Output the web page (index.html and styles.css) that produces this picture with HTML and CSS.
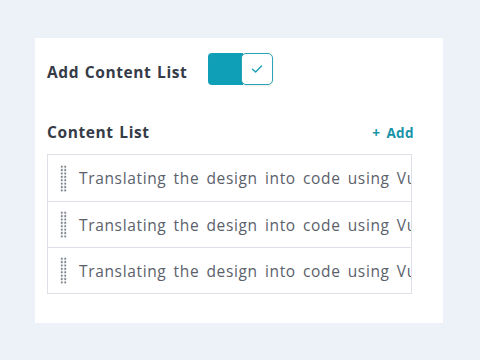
FILE: index.html
```html
<!DOCTYPE html>
<html lang="en">
<head>
    <meta charset="UTF-8">
    <meta name="viewport" content="width=device-width, initial-scale=1.0">
    <title>Content List</title>
    <link rel="stylesheet" href="styles.css">
</head>
<body>
    <div class="panel">
        <div class="setting">
            <span class="setting-label">Add Content List</span>
            <button class="toggle on" aria-label="Add Content List">
                <span class="toggle-fill"></span>
                <span class="toggle-knob">
                    <svg width="12" height="10" viewBox="0 0 12 10"><path d="M1.5 5.2 4.6 8 10.5 2" fill="none" stroke="#1a9fb4" stroke-width="1.4" stroke-linecap="round" stroke-linejoin="round"/></svg>
                </span>
            </button>
        </div>

        <div class="list-head">
            <span class="list-title">Content List</span>
            <a class="add-link" href="#">+ Add</a>
        </div>

        <ul class="content-list">
            <li class="item"><span class="handle"></span><span class="item-text">Translating the design into code using Vue.js</span></li>
            <li class="item"><span class="handle"></span><span class="item-text">Translating the design into code using Vue.js</span></li>
            <li class="item"><span class="handle"></span><span class="item-text">Translating the design into code using Vue.js</span></li>
        </ul>
    </div>
</body>
</html>
```

FILE: styles.css
```css
* {
    margin: 0;
    padding: 0;
    box-sizing: border-box;
}

body {
    font-family: "Open Sans", "Noto Sans", sans-serif;
    background: #edf1f8;
    padding: 38px 37px 0 35px;
}

.panel {
    background: #fff;
    height: 285px;
    padding: 17px 31px 0 12px;
}

.setting {
    display: flex;
    align-items: center;
    height: 32px;
    margin-top: -2px;
}

.setting-label {
    font-size: 15.5px;
    font-weight: 700;
    color: #353b47;
    width: 161px;
    letter-spacing: 0.6px;
    word-spacing: 1px;
    padding-top: 5px;
}

.toggle {
    display: flex;
    width: 65px;
    height: 32px;
    border: none;
    background: none;
    cursor: pointer;
}

.toggle-fill {
    flex: 1;
    background: #0fa0b7;
    border-radius: 4px 0 0 4px;
}

.toggle-knob {
    width: 32px;
    height: 32px;
    margin-left: -2px;
    background: #fff;
    border: 1.5px solid #2aa3b6;
    border-radius: 5px;
    display: flex;
    align-items: center;
    justify-content: center;
    box-shadow: 0 1px 2px rgba(0,0,0,0.08);
}

.list-head {
    display: flex;
    justify-content: space-between;
    align-items: baseline;
    margin-top: 36px;
}

.list-title {
    font-size: 15.5px;
    font-weight: 700;
    color: #353b47;
    letter-spacing: 0.6px;
    word-spacing: 1px;
}

.add-link {
    font-size: 13.5px;
    font-weight: 700;
    color: #1894a8;
    text-decoration: none;
    letter-spacing: 0.4px;
    word-spacing: 2px;
    margin-right: -2px;
}

.content-list {
    list-style: none;
    margin-top: 11px;
    border: 1px solid #dde1e7;
}

.item {
    display: flex;
    align-items: center;
    height: 46px;
    padding-left: 12px;
    overflow: hidden;
    white-space: nowrap;
}

.item + .item {
    border-top: 1px solid #dde1e7;
}

.handle {
    flex: none;
    width: 7px;
    height: 27px;
    margin-right: 12px;
    background-image: radial-gradient(circle, #7a808a 1.1px, transparent 1.4px);
    background-size: 3.5px 3.4px;
}

.item-text {
    font-size: 15.5px;
    color: #5b616b;
    letter-spacing: 0.65px;
    word-spacing: 2.5px;
}
```
